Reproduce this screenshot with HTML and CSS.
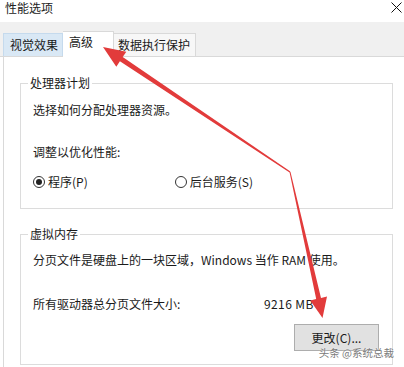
FILE: index.html
```html
<!DOCTYPE html>
<html lang="zh-CN">
<head>
<meta charset="utf-8">
<title>性能选项</title>
<link rel="stylesheet" href="styles.css">
</head>
<body>
<div class="window">
  <div class="titlebar">
    <span class="title">性能选项</span>
    <svg class="close" width="11" height="11" viewBox="0 0 11 11"><path d="M0.5 0.5 L10.5 10.5 M10.5 0.5 L0.5 10.5" stroke="#111" stroke-width="1" fill="none"/></svg>
  </div>
  <div class="tabstrip">
    <div class="tab tab-hover">视觉效果</div>
    <div class="tab tab-active">高级</div>
    <div class="tab tab-last">数据执行保护</div>
  </div>
  <div class="pane">
    <fieldset class="group group-cpu">
      <legend class="legend">处理器计划</legend>
      <div class="line first">选择如何分配处理器资源。</div>
      <div class="line adjust">调整以优化性能:</div>
      <div class="radios">
        <label class="radio"><span class="dot checked"></span>程序(P)</label>
        <label class="radio second"><span class="dot"></span>后台服务(S)</label>
      </div>
    </fieldset>
    <fieldset class="group group-mem">
      <legend class="legend">虚拟内存</legend>
      <div class="line first">分页文件是硬盘上的一块区域，Windows 当作 RAM 使用。</div>
      <div class="sizes">
        <span class="size-label">所有驱动器总分页文件大小:</span>
        <span class="size-value">9216 MB</span>
      </div>
      <div class="actions"><button class="btn">更改(C)...</button></div>
    </fieldset>
  </div>
  <svg class="arrows" width="404" height="367" viewBox="0 0 404 367">
    <polygon fill="#e23b3b" points="290.4,171.6 122.7,57.1 126.3,51.7 103,47 116.3,66.7 119.9,61.3 289.6,172.4"/>
    <polygon fill="#e23b3b" points="289.5,172.1 316.2,299 310.3,300.4 322.5,318 327,296.4 321,298 290.5,171.9"/>
  </svg>
  <div class="watermark">头条 @系统总裁</div>
</div>
</body>
</html>
```
FILE: styles.css
```css
html, body {
  margin: 0;
  padding: 0;
  background: #ffffff;
}
body {
  font-family: "Noto Sans CJK SC", "Noto Sans", "Liberation Sans", sans-serif;
  font-size: 12px;
  color: #1a1a1a;
}
.window {
  position: relative;
  width: 404px;
  height: 367px;
  overflow: hidden;
  background: #ffffff;
}
.titlebar {
  height: 22px;
  display: flex;
  align-items: flex-start;
  justify-content: space-between;
  padding: 0 2px 0 5px;
  box-sizing: border-box;
  background: #ffffff;
}
.title {
  line-height: 16px;
  font-size: 12px;
  color: #222;
}
.close {
  margin-top: 2px;
}
.tabstrip {
  height: 35px;
  background: #f0f0f0;
  border-bottom: 1px solid #d9d9d9;
  display: flex;
  align-items: flex-end;
  padding-left: 3px;
  box-sizing: border-box;
}
.tab {
  height: 23px;
  line-height: 21px;
  white-space: nowrap;
  border: 1px solid #d9d9d9;
  border-bottom: none;
  box-sizing: border-box;
  background: #f7f7f7;
  color: #1a1a1a;
}
.tab-hover {
  padding: 0 4px 0 6px;
  background: #d9e8f5;
  border-color: #c5daed;
}
.tab-active {
  height: 26px;
  line-height: 20px;
  padding: 0 20px 0 6px;
  background: #ffffff;
  margin-bottom: -1px;
  position: relative;
  border-left: none;
}
.tab-last {
  padding: 0 5px 0 4px;
  border-left: none;
}
.pane {
  border-left: 1px solid #d9d9d9;
  margin-left: 3px;
  padding: 18px 11px 0 16px;
  background: #ffffff;
  height: 310px;
  box-sizing: border-box;
}
.group {
  margin: 0;
  padding: 0 13px 0 12px;
  border: 1px solid #dcdcdc;
  min-width: 0;
}
.legend {
  padding: 0 2px;
  margin-left: -5px;
  line-height: 16px;
  font-size: 12px;
  color: #1a1a1a;
}
.line {
  line-height: 16px;
  white-space: nowrap;
}
.group-cpu .first {
  margin-top: 11px;
}
.adjust {
  margin-top: 26px;
}
.radios {
  display: flex;
  margin-top: 14px;
  height: 16px;
  margin-bottom: 18px;
}
.radio {
  display: flex;
  align-items: center;
  gap: 3px;
  line-height: 16px;
}
.radio.second {
  margin-left: 87px;
}
.dot {
  width: 12px;
  height: 12px;
  border: 1px solid #333;
  border-radius: 50%;
  box-sizing: border-box;
  display: inline-flex;
  align-items: center;
  justify-content: center;
  background: #fff;
}
.dot.checked::after {
  content: "";
  width: 6px;
  height: 6px;
  border-radius: 50%;
  background: #222;
}
.group-mem {
  margin-top: 17px;
  height: 139px;
  box-sizing: border-box;
}
.group-mem .first {
  margin-top: 10px;
}
.sizes {
  display: grid;
  grid-template-columns: 231px auto;
  line-height: 16px;
  margin-top: 28px;
}
.size-value {
  letter-spacing: 0.4px;
}
.actions {
  display: flex;
  justify-content: flex-end;
  margin-top: 12px;
}
.btn {
  width: 85px;
  height: 27px;
  background: #e1e1e1;
  border: 1px solid #adadad;
  font-family: inherit;
  font-size: 12px;
  color: #1a1a1a;
  padding: 0;
}
.arrows {
  position: absolute;
  left: 0;
  top: 0;
  pointer-events: none;
}
.watermark {
  position: absolute;
  right: 10px;
  bottom: 8px;
  font-size: 10.5px;
  line-height: 12px;
  color: #7a7a7a;
  text-shadow: 0 0 2px #fff;
}
```
